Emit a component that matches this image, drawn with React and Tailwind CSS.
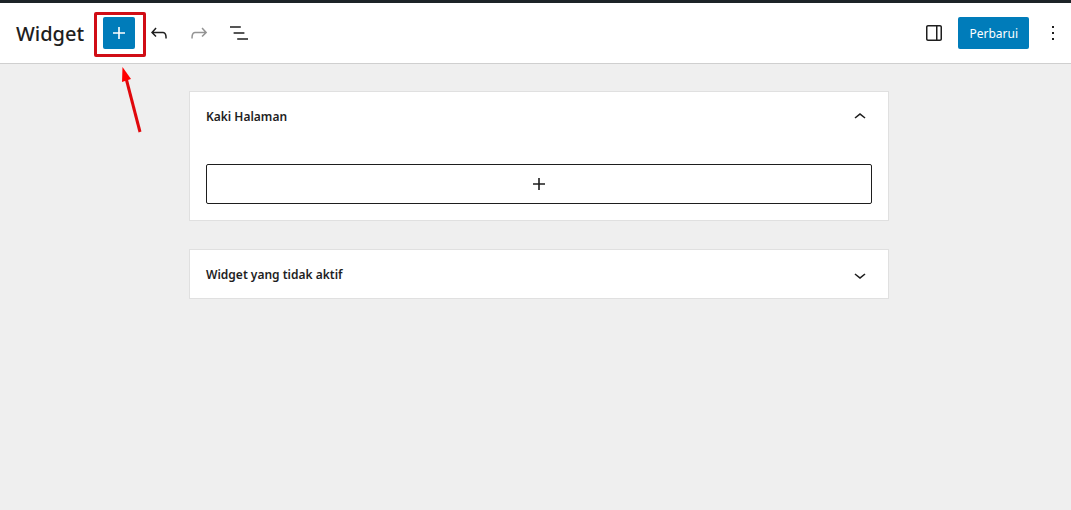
import { useState } from "react";

const icons = {
  plus: "M18 11.2h-5.2V6h-1.6v5.2H6v1.6h5.2V18h1.6v-5.2H18z",
  undo: "M18.3 11.7c-.6-.6-1.4-.9-2.3-.9H6.7l2.9-3.3-1.1-1-4.5 5L8.5 16l1-1-2.7-2.7H16c.5 0 .9.2 1.3.5 1 1 1 3.4 1 4.5v.3h1.5v-.2c0-1.5 0-4.3-1.5-5.7z",
  redo: "M15.6 6.5l-1.1 1 2.9 3.3H8c-.9 0-1.7.3-2.3.9-1.4 1.5-1.4 4.2-1.4 5.6v.2h1.5v-.3c0-1.1 0-3.5 1-4.5.3-.3.7-.5 1.3-.5h9.2L14.5 15l1.1 1.1 4.6-4.6-4.6-5z",
  listView: "M13.8 5.2H3v1.5h10.8V5.2zm-3.6 12v1.5H21v-1.5H10.2zm7.2-6H6.6v1.5h10.8v-1.5z",
  drawer:
    "M18 4H6c-1.1 0-2 .9-2 2v12c0 1.1.9 2 2 2h12c1.1 0 2-.9 2-2V6c0-1.1-.9-2-2-2zm-4 14.5H6c-.3 0-.5-.2-.5-.5V6c0-.3.2-.5.5-.5h8v13zm4.5-.5c0 .3-.2.5-.5.5h-2.5v-13H18c.3 0 .5.2.5.5v12z",
  more: "M13 19h-2v-2h2v2zm0-6h-2v-2h2v2zm0-6h-2V5h2v2z",
  chevronUp: "M6.5 12.4L12 8l5.5 4.4-.9 1.2L12 10l-4.5 3.6-1-1.2z",
  chevronDown: "M17.5 11.6L12 16l-5.5-4.4.9-1.2L12 14l4.5-3.6 1 1.2z",
};

function Icon({ name }) {
  return (
    <svg viewBox="0 0 24 24" className="size-6 shrink-0 fill-current" aria-hidden="true">
      <path d={icons[name]} />
    </svg>
  );
}

function ToolbarButton({ icon, label, disabled }) {
  return (
    <button
      type="button"
      aria-label={label}
      disabled={disabled}
      className="flex size-8 items-center justify-center disabled:text-[#949494]"
    >
      <Icon name={icon} />
    </button>
  );
}

function WidgetArea({ title, defaultOpen = false }) {
  const [open, setOpen] = useState(defaultOpen);

  return (
    <section className="border border-[#e0e0e0] bg-white">
      <h2>
        <button
          type="button"
          aria-expanded={open}
          onClick={() => setOpen((prev) => !prev)}
          className="flex h-12 w-full items-center justify-between px-4 pt-0.5 text-left text-xs font-semibold"
        >
          {title}
          <Icon name={open ? "chevronUp" : "chevronDown"} />
        </button>
      </h2>
      {open && (
        <div className="px-4 pt-6 pb-4">
          <button
            type="button"
            aria-label="Tambahkan blok"
            className="flex h-10 w-full items-center justify-center rounded-xs border border-[#1e1e1e]"
          >
            <Icon name="plus" />
          </button>
        </div>
      )}
    </section>
  );
}

export default function App() {
  return (
    <div className="min-h-screen bg-[#efefef] font-['Noto_Sans','Open_Sans',sans-serif] text-[#1e1e1e]">
      <header className="flex h-16 items-center justify-between border-t-3 border-b border-t-[#1d2327] border-b-[#cfcfcf] bg-white pr-0.5 pl-4">
        <div className="flex items-center gap-[19px]">
          <h1 className="pt-0.5 text-xl font-medium">Widget</h1>
          <div className="flex items-center gap-2">
            <div className="relative">
              <button
                type="button"
                aria-label="Tambahkan blok"
                className="flex size-8 items-center justify-center rounded-xs bg-[#007cba] text-white"
              >
                <Icon name="plus" />
              </button>
              <div className="pointer-events-none absolute -top-[5px] -left-[9px] h-[45px] w-[52px] rounded-xs border-3 border-[#d00d15]" />
              <svg
                viewBox="0 0 24 70"
                className="pointer-events-none absolute top-12 left-4 h-[70px] w-6"
                aria-hidden="true"
              >
                <path d="M7 13L21 67" stroke="#e0080c" strokeWidth="3" />
                <path d="M3.5 2L12 14L3 17Z" fill="#ff0000" />
              </svg>
            </div>
            <ToolbarButton icon="undo" label="Urungkan" />
            <ToolbarButton icon="redo" label="Ulangi" disabled />
            <ToolbarButton icon="listView" label="Tampilan daftar" />
          </div>
        </div>
        <div className="flex items-center gap-2">
          <ToolbarButton icon="drawer" label="Pengaturan" />
          <button type="button" className="h-8 rounded-xs bg-[#007cba] px-[11px] pt-0.5 text-xs text-white">
            Perbarui
          </button>
          <ToolbarButton icon="more" label="Opsi" />
        </div>
      </header>

      <main className="pt-[27px] pl-[7px]">
        <div className="mx-auto flex max-w-[700px] flex-col gap-7">
          <WidgetArea title="Kaki Halaman" defaultOpen />
          <WidgetArea title="Widget yang tidak aktif" />
        </div>
      </main>
    </div>
  );
}
